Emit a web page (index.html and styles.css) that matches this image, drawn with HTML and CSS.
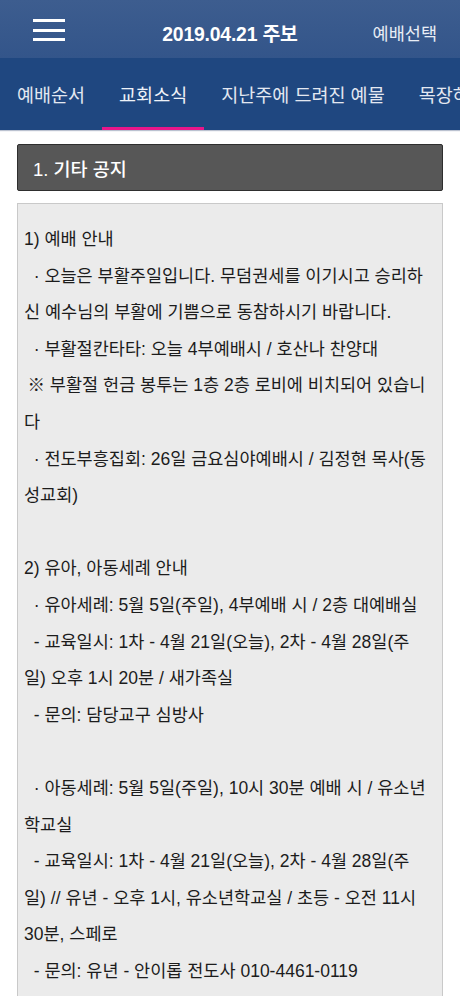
FILE: index.html
```html
<!DOCTYPE html>
<html lang="ko">
<head>
<meta charset="utf-8">
<title>2019.04.21 주보</title>
<link rel="stylesheet" href="styles.css">
</head>
<body>
<header class="topbar">
  <button class="menu" aria-label="메뉴">
    <span></span><span></span><span></span>
  </button>
  <h1 class="title">2019.04.21 주보</h1>
  <a class="select">예배선택</a>
</header>
<nav class="tabs">
  <a class="tab">예배순서</a>
  <a class="tab active">교회소식</a>
  <a class="tab">지난주에 드려진 예물</a>
  <a class="tab">목장하기</a>
</nav>
<main class="content">
  <h2 class="section-title">1. 기타 공지</h2>
  <div class="notice">
    <p>1) 예배 안내</p>
    <p>&nbsp;&nbsp;· 오늘은 부활주일입니다. 무덤권세를 이기시고 승리하<br>신 예수님의 부활에 기쁨으로 동참하시기 바랍니다.</p>
    <p>&nbsp;&nbsp;· 부활절칸타타: 오늘 4부예배시 / 호산나 찬양대</p>
    <p>&thinsp;※ 부활절 헌금 봉투는 1층 2층 로비에 비치되어 있습니<br>다</p>
    <p>&nbsp;&nbsp;· 전도부흥집회: 26일 금요심야예배시 / 김정현 목사(동<br>성교회)</p>
    <p class="blank">&nbsp;</p>
    <p>2) 유아, 아동세례 안내</p>
    <p>&nbsp;&nbsp;· 유아세례: 5월 5일(주일), 4부예배 시 / 2층 대예배실</p>
    <p>&nbsp;&nbsp;- 교육일시: 1차 - 4월 21일(오늘), 2차 - 4월 28일(주<br>일) 오후 1시 20분 / 새가족실</p>
    <p>&nbsp;&nbsp;- 문의: 담당교구 심방사</p>
    <p class="blank">&nbsp;</p>
    <p>&nbsp;&nbsp;· 아동세례: 5월 5일(주일), 10시 30분 예배 시 / 유소년<br>학교실</p>
    <p>&nbsp;&nbsp;- 교육일시: 1차 - 4월 21일(오늘), 2차 - 4월 28일(주<br>일) // 유년 - 오후 1시, 유소년학교실 / 초등 - 오전 11시<br>30분, 스페로</p>
    <p>&nbsp;&nbsp;- 문의: 유년 - 안이롭 전도사 010-4461-0119</p>
  </div>
</main>
</body>
</html>
```

FILE: styles.css
```css
* { box-sizing: border-box; }
html, body {
  margin: 0;
  padding: 0;
  background: #ffffff;
  font-family: "Liberation Sans", "Noto Sans CJK KR", sans-serif;
}
.topbar {
  height: 58px;
  background: linear-gradient(#3d5d8f, #33558a);
  display: grid;
  grid-template-columns: 1fr auto 1fr;
  align-items: center;
  padding: 6px 23px 0 23px;
  color: #ffffff;
}
.menu {
  justify-self: start;
  width: 32px;
  height: 22px;
  margin: -4px 0 0 10px;
  padding: 0;
  border: 0;
  background: transparent;
  display: flex;
  flex-direction: column;
  justify-content: space-between;
}
.menu span {
  display: block;
  height: 3px;
  background: #ffffff;
}
.title {
  margin: 0;
  font-size: 19.4px;
  font-weight: 700;
  letter-spacing: -0.2px;
}
.select {
  justify-self: end;
  font-size: 17.5px;
  color: #e9eef6;
}
.tabs {
  height: 72px;
  background: #1f4780;
  display: flex;
  align-items: stretch;
  overflow: hidden;
  white-space: nowrap;
  box-shadow: 0 1px 1px rgba(60, 80, 120, 0.35);
}
.tab {
  flex: none;
  display: flex;
  align-items: center;
  padding: 3px 17px 0 17px;
  font-size: 18.5px;
  color: #e3e8f1;
  border-bottom: 3px solid transparent;
}
.tab.active {
  border-bottom-color: #e8168a;
  color: #eef2f8;
}
.content {
  padding: 14px 17px 0 17px;
}
.section-title {
  margin: 0;
  height: 47px;
  background: #575757;
  border: 1px solid #2e2e2e;
  border-radius: 2px;
  color: #ffffff;
  font-size: 18.5px;
  font-weight: 500;
  display: flex;
  align-items: center;
  padding: 0 0 0 15px;
}
.notice {
  margin-top: 12px;
  background: #ebebeb;
  border: 1px solid #c9c9c9;
  padding: 17px 6px 40px 6px;
  font-size: 17.5px;
  line-height: 36.6px;
  color: #1c1c1c;
}
.notice p {
  margin: 0;
}
```
